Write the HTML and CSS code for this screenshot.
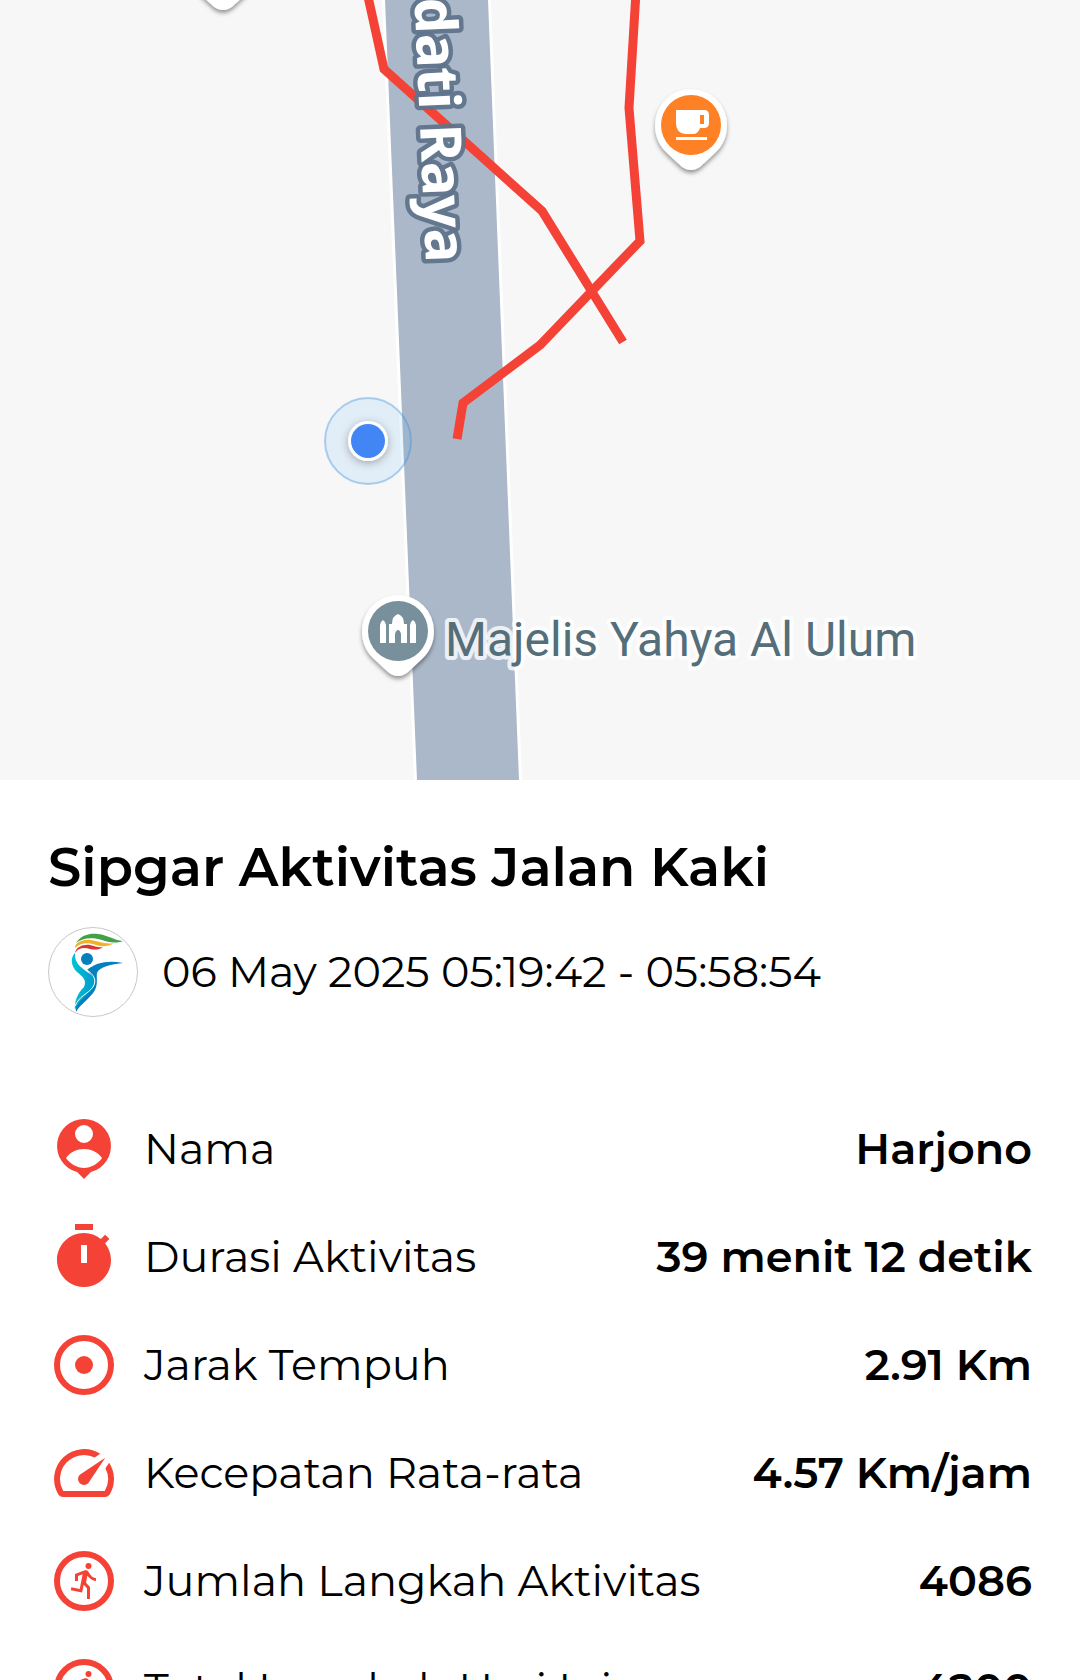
FILE: index.html
```html
<!DOCTYPE html>
<html lang="id">
<head>
  <meta charset="utf-8">
  <meta name="viewport" content="width=device-width, initial-scale=1">
  <title>Sipgar Aktivitas Jalan Kaki</title>
  <link rel="stylesheet" href="styles.css">
</head>
<body>
  <main class="screen">
    <svg class="map" viewBox="0 0 1080 780" preserveAspectRatio="xMidYMid slice" role="img" aria-label="Peta rute aktivitas">
      <defs>
        <filter id="pin-shadow" x="-30%" y="-30%" width="160%" height="160%">
          <feDropShadow dx="0" dy="3" stdDeviation="2" flood-color="#000" flood-opacity="0.4"/>
        </filter>
        <filter id="dot-shadow" x="-50%" y="-50%" width="200%" height="200%">
          <feDropShadow dx="0" dy="2" stdDeviation="4" flood-color="#000" flood-opacity="0.3"/>
        </filter>
        <path id="pin" d="M0-36A36 36 0 0 1 36 0C36 11 32 20 25 27L10 41Q0 49-10 41L-25 27C-32 20-36 11-36 0A36 36 0 0 1 0-36Z"/>
      </defs>
      <path class="road-edge" d="M382 0H491L522 780H414Z"/>
      <path class="road" d="M385 0H488L519 780H417Z"/>
      <circle class="accuracy" cx="368" cy="441" r="43"/>
      <circle cx="368" cy="441" r="20" fill="#fff" filter="url(#dot-shadow)"/>
      <circle cx="368" cy="441" r="17" fill="#4285f4"/>
      <path class="route" d="M367-8 384 69 542 211 623 342"/>
      <path class="route" d="M636-8 629 108 640 241 540 345 463 403 457 439"/>
      <text class="road-name" transform="translate(426 263) rotate(87.5)">Sedati Raya</text>
      <use href="#pin" x="223" y="-35" fill="#fff" filter="url(#pin-shadow)"/>
      <g transform="translate(691 125)">
        <use href="#pin" fill="#fff" filter="url(#pin-shadow)"/>
        <circle r="30" fill="#ff8126"/>
        <path fill="#fff" fill-rule="evenodd" d="M-15-15H13Q18-15 18-10V-2Q18 3 13 3H9Q7 9 2 9H-6Q-15 8-15-2ZM9-10V-1H13V-10ZM-15 12H16V15H-15Z"/>
      </g>
      <g transform="translate(398 631)">
        <use href="#pin" fill="#fff" filter="url(#pin-shadow)"/>
        <circle r="30" fill="#78909c"/>
        <path fill="#fff" d="M-18 12V-6Q-18-9-15-11Q-12-9-12-6V12ZM12 12V-6Q12-9 15-11Q18-9 18-6V12ZM-9 12V-7H-6Q-6-15 0-17Q6-15 6-7H9V12H3V3Q2-1 0-1Q-2-1-3 3V12Z"/>
      </g>
      <text class="place-name" x="445" y="656">Majelis Yahya Al Ulum</text>
    </svg>

    <section class="details">
      <h1 class="title">Sipgar Aktivitas Jalan Kaki</h1>
      <div class="session">
        <svg class="logo" viewBox="0 0 90 90" aria-hidden="true">
          <defs>
            <linearGradient id="body-blue" x1="0" y1="0" x2="1" y2="0">
              <stop offset="0" stop-color="#00c4d6"/>
              <stop offset="1" stop-color="#0099c9"/>
            </linearGradient>
          </defs>
          <circle cx="45" cy="45" r="44.500" fill="#fff" stroke="#c8c8c8"/>
          <path fill="#43a047" d="M28 16C33 8 42 6 50 7C60 8 65 13 75 14C67 17 60 15 54 13C44 10 34 11 28 16Z"/>
          <path fill="#f2b12c" d="M27 21C27 16 34 12 43 13C51 14 57 18 66 16C60 20 54 20 48 18C39 15 32 16 27 21Z"/>
          <path fill="#db352d" d="M27 26C28 20 35 17 42 18C47 19 50 21 55 20C51 23 47 23 42 22C36 20 30 21 27 26Z"/>
          <circle cx="39" cy="32" r="6" fill="#0380bd"/>
          <path fill="#0380bd" d="M39 43C48 35 61 33 75 36C65 37 55 39 50 44C47 48 51 55 47 63C42 72 32 77 28 85C26 75 35 70 40 61C45 53 46 49 39 43Z"/>
          <path fill="url(#body-blue)" d="M27 26C22 31 23 39 29 45C35 50 39 53 36 60C30 66 26 74 27 83C30 74 37 70 42 64C46 60 49 55 46 50C38 43 26 39 27 26Z"/>
          <path fill="none" stroke="#fff" stroke-width="1" d="M39 43C46 48 49 53 45 60C40 67 31 69 27 79"/>
        </svg>
        <time class="period">06 May 2025 05:19:42 - 05:58:54</time>
      </div>

      <dl class="stats">
        <div class="stat">
          <svg class="icon" viewBox="0 0 24 24" aria-hidden="true"><path fill-rule="evenodd" d="M12 2a9 9 0 0 0-2.3 17.7L12 22l2.3-2.3A9 9 0 0 0 12 2zM12 4a3 3 0 1 1 0 6 3 3 0 0 1 0-6zM6 15c1.400-2 3.700-3 6-3s4.600 1 6 3c-1.400 2-3.700 3.300-6 3.300S7.400 17 6 15z"/></svg>
          <dt class="label">Nama</dt>
          <dd class="value">Harjono</dd>
        </div>
        <div class="stat">
          <svg class="icon" viewBox="0 0 24 24" aria-hidden="true"><path fill-rule="evenodd" d="M15 1H9v2h6V1zm-4 13h2V8h-2v6zm8.030-6.610l1.420-1.420c-.43-.51-.9-.99-1.410-1.410l-1.420 1.420C16.070 4.740 14.120 4 12 4c-4.970 0-9 4.030-9 9s4.020 9 9 9 9-4.030 9-9c0-2.120-.74-4.070-1.970-5.610z"/></svg>
          <dt class="label">Durasi Aktivitas</dt>
          <dd class="value">39 menit 12 detik</dd>
        </div>
        <div class="stat">
          <svg class="icon" viewBox="0 0 24 24" aria-hidden="true"><circle cx="12" cy="12" r="9" fill="none" stroke="currentColor" stroke-width="2"/><circle cx="12" cy="12" r="3"/></svg>
          <dt class="label">Jarak Tempuh</dt>
          <dd class="value">2.91 Km</dd>
        </div>
        <div class="stat">
          <svg class="icon" viewBox="0 0 24 24" aria-hidden="true"><path d="M20.380 8.570l-1.230 1.850a8 8 0 0 1-.22 7.580H5.070A8 8 0 0 1 15.580 6.850l1.850-1.230A10 10 0 0 0 3.350 19a2 2 0 0 0 1.720 1h13.850a2 2 0 0 0 1.740-1 10 10 0 0 0-.27-10.440zm-9.790 6.840a2 2 0 0 0 2.830 0l5.660-8.490-8.490 5.660a2 2 0 0 0 0 2.830z"/></svg>
          <dt class="label">Kecepatan Rata-rata</dt>
          <dd class="value">4.57 Km/jam</dd>
        </div>
        <div class="stat">
          <svg class="icon" viewBox="0 0 24 24" aria-hidden="true"><g id="runner"><circle cx="12" cy="12" r="9" fill="none" stroke="currentColor" stroke-width="2"/><circle cx="13.500" cy="7" r="1"/><path d="M16 12c-.7 0-2.010-.54-2.910-1.760l-.41 2.350L14 14.030V18h-1v-3.580l-1.110-1.210-.52 2.640L7.600 15.080l.2-.98 2.780.57.96-4.890-1.540.57V12H9V9.650l3.280-1.210c.49-.18 1.030.06 1.260.53C14.370 10.670 15.590 11 16 11z"/></g></svg>
          <dt class="label">Jumlah Langkah Aktivitas</dt>
          <dd class="value">4086</dd>
        </div>
        <div class="stat">
          <svg class="icon" viewBox="0 0 24 24" aria-hidden="true"><use href="#runner"/></svg>
          <dt class="label">Total Langkah Hari Ini</dt>
          <dd class="value">4200</dd>
        </div>
      </dl>
    </section>
  </main>
</body>
</html>
```

FILE: styles.css
```css
* {
  box-sizing: border-box;
}

body {
  margin: 0;
  background: #fff;
  color: #000;
  font-family: Montserrat, Inter, "Open Sans", sans-serif;
}

.screen {
  height: 100vh;
  overflow-y: auto;
  scrollbar-width: none;
}

.map {
  display: block;
  width: 100%;
  aspect-ratio: 18 / 13;
  background: #f7f7f7;
}

.road {
  fill: #abb8c9;
}

.road-edge {
  fill: #fff;
}

.accuracy {
  fill: rgb(66 165 245 / 12%);
  stroke: rgb(66 145 220 / 40%);
  stroke-width: 2px;
}

.route {
  fill: none;
  stroke: #f44336;
  stroke-width: 9px;
}

.road-name,
.place-name {
  font-family: Roboto, sans-serif;
  paint-order: stroke;
  stroke-linejoin: round;
}

.road-name {
  fill: #fff;
  font-family: "Noto Sans", sans-serif;
  font-size: 57px;
  font-weight: 700;
  stroke: rgb(95 115 140 / 95%);
  stroke-width: 9px;
  text-anchor: end;
}

.place-name {
  fill: #546e7a;
  font-size: 48px;
  stroke: rgb(255 255 255 / 80%);
  stroke-width: 8px;
}

.details {
  padding: 57px 48px;
}

.title {
  margin: 0 0 30px;
  font-size: 53px;
  font-weight: 600;
  line-height: 60px;
}

.session {
  display: flex;
  align-items: center;
  gap: 24px;
  margin-bottom: 96px;
}

.logo {
  flex: none;
  width: 90px;
  height: 90px;
}

.period,
.stat {
  font-size: 43px;
  line-height: 50px;
}

.period,
.label {
  font-weight: 400;
}

.stats {
  display: grid;
  gap: 36px;
  margin: 0;
}

.stat {
  display: flex;
  align-items: center;
  gap: 24px;
}

.icon {
  flex: none;
  width: 72px;
  height: 72px;
  color: #f44336;
  fill: currentColor;
}

.label {
  flex: 1;
}

.value {
  margin: 0;
  font-weight: 600;
  text-align: right;
}
```
